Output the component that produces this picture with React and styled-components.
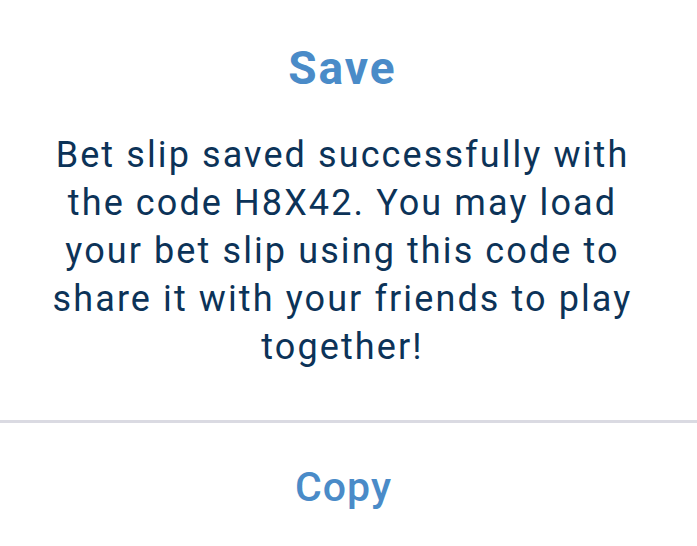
import React from 'react'
import styled, { createGlobalStyle } from 'styled-components'

const GlobalStyle = createGlobalStyle`
  html, body {
    margin: 0;
    padding: 0;
    background: #ffffff;
  }
  body {
    font-family: Roboto, "Liberation Sans", Arial, sans-serif;
  }
`

const Dialog = styled.div`
  display: flex;
  flex-direction: column;
  width: 697px;
  height: 546px;
  background: #ffffff;
`

const Content = styled.div`
  display: flex;
  flex-direction: column;
  align-items: center;
  padding: 40px 50px 0 38px;
  height: 380px;
  box-sizing: border-box;
`

const Title = styled.h2`
  margin: 0 0 35px;
  font-size: 46px;
  line-height: 56px;
  font-weight: 700;
  letter-spacing: 2px;
  color: #4a8bc8;
`

const Message = styled.p`
  margin: 0;
  font-size: 36px;
  line-height: 48px;
  font-weight: 400;
  letter-spacing: 2.1px;
  color: #0c3358;
  text-align: center;
`

const Divider = styled.hr`
  margin: 40px 0 0;
  border: 0;
  height: 3px;
  background: #dadae2;
`

const Action = styled.button`
  flex: 1;
  border: 0;
  background: transparent;
  font-family: inherit;
  font-size: 41px;
  font-weight: 500;
  letter-spacing: 1px;
  color: #4a8bc8;
  cursor: pointer;
  padding: 4px 10px 0 0;
`

const App = () => (
  <>
    <GlobalStyle />
    <Dialog>
      <Content>
        <Title>Save</Title>
        <Message>
          Bet slip saved successfully with the code H8X42. You may load your bet slip using this code to
          share it with your friends to play together!
        </Message>
      </Content>
      <Divider />
      <Action>Copy</Action>
    </Dialog>
  </>
)

export default App
